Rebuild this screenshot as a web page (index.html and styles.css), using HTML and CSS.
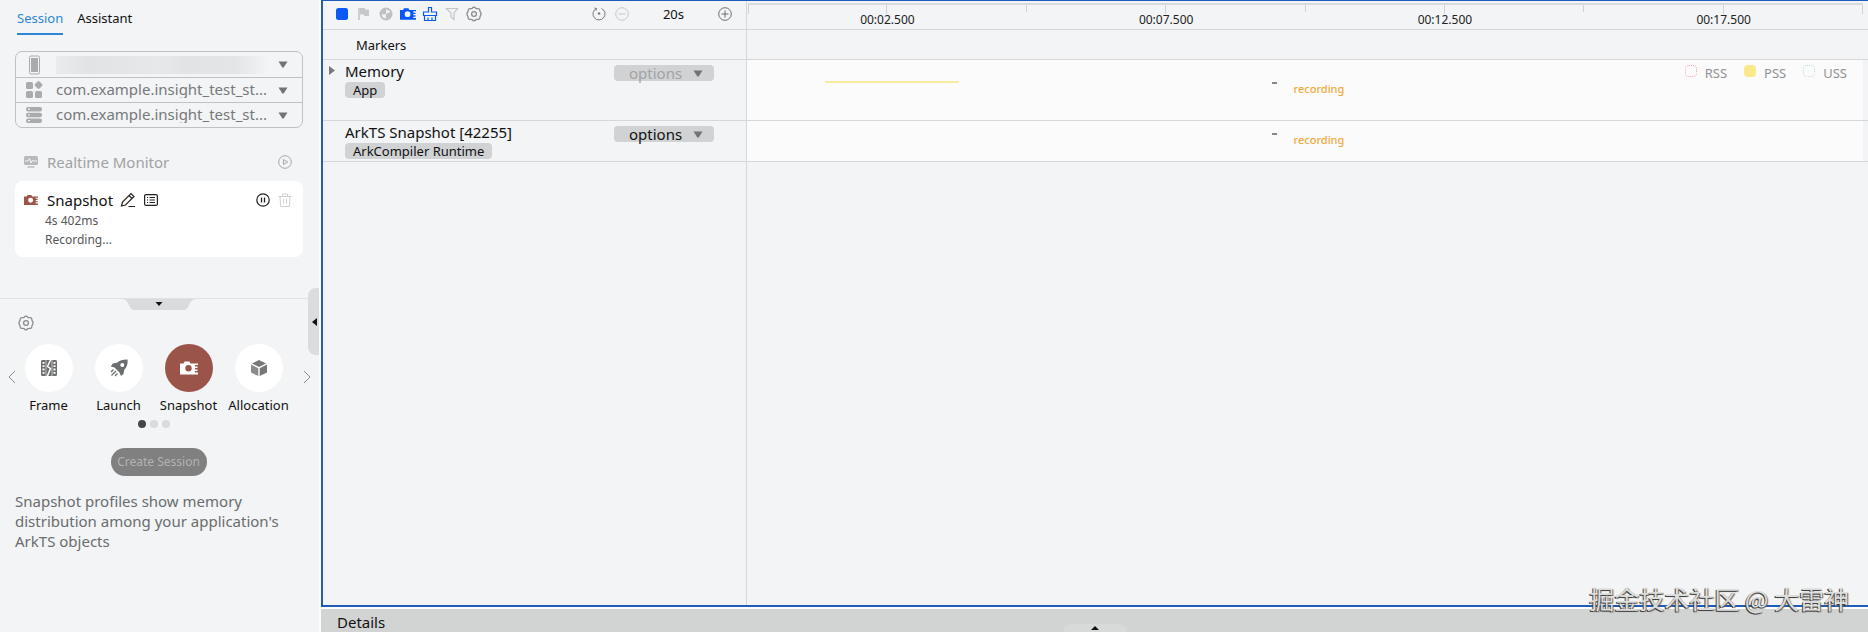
FILE: index.html
```html
<!DOCTYPE html>
<html lang="en">
<head>
<meta charset="utf-8">
<title>Profiler</title>
<link rel="stylesheet" href="styles.css">
</head>
<body>
<svg class="defs" aria-hidden="true">
  <defs>
    <symbol id="gear" viewBox="0 0 16 16"><path d="M6.200 2.200Q8 .2 9.800 2.200q.6.500 1.500.4 2.600-.3 2.600 2.100 0 .8.500 1.500 1.300 1.800 0 3.600-.5.700-.5 1.500 0 2.400-2.600 2.100-.9-.1-1.500.4-1.800 2-3.600 0-.6-.5-1.500-.4-2.600.3-2.600-2.100 0-.8-.5-1.500-1.300-1.800 0-3.600.5-.7.500-1.500 0-2.400 2.600-2.100.9.100 1.500-.4z" fill="none" stroke="currentColor" stroke-width="1.300" stroke-linejoin="round"/><circle cx="8" cy="8" r="2.400" fill="none" stroke="currentColor" stroke-width="1.300"/></symbol>
    <symbol id="camera" viewBox="0 0 18 15"><path fill-rule="evenodd" d="M0 3h3.500l1-2h5l1 2H18v1.500h-3V6h2.500v1.500H15V9h2.500v1.500H15V12h3v2H0zM8.500 4.500a3.200 3.200 0 1 0 0 6.400 3.200 3.200 0 0 0 0-6.400z" fill="currentColor"/></symbol>
    <symbol id="down" viewBox="0 0 10 7"><path d="M.5.500h9L5.800 6.200q-.8.900-1.600 0z" fill="currentColor"/></symbol>
  </defs>
</svg>
<div class="app">
  <aside class="sidebar">
    <section class="sessions">
      <nav class="tabs">
        <button class="tab tab-active">Session</button>
        <button class="tab">Assistant</button>
      </nav>
      <div class="targets">
        <div class="target">
          <svg class="target-icon" viewBox="0 0 18 20"><rect x="4.500" y="1" width="10" height="18" rx="1.500" fill="none" stroke="#a9abad"/><rect x="6" y="3" width="7" height="14" fill="#a9abad"/></svg>
          <span class="redacted"></span>
          <select class="target-select" aria-label="Device"><option></option></select>
          <svg class="caret"><use href="#down"/></svg>
        </div>
        <div class="target">
          <svg class="target-icon" viewBox="0 0 18 20" fill="#a9abad"><rect x="1" y="2" width="7" height="7" rx="1.500"/><rect x="1" y="11" width="7" height="7" rx="1.500"/><rect x="10" y="11" width="7" height="7" rx="1.500"/><path d="M13.500 1q.6 0 1 .4l2.600 2.700q.7.900 0 1.800l-2.600 2.700q-.9.800-1.900 0L10 5.900q-.8-.9 0-1.800l2.600-2.700q.4-.4.900-.4z"/></svg>
          <select class="target-select" aria-label="Application"><option>com.example.insight_test_st...</option></select>
          <svg class="caret"><use href="#down"/></svg>
        </div>
        <div class="target">
          <svg class="target-icon" viewBox="0 0 18 20"><g fill="#a9abad"><rect x="1" y="2" width="16" height="4.500" rx="2"/><rect x="1" y="7.700" width="16" height="4.500" rx="2"/><rect x="1" y="13.400" width="16" height="4.500" rx="2"/></g><path d="M3 4.200h2M3 10h2M3 15.700h2" stroke="#f2f4f5" stroke-width="1.200"/></svg>
          <select class="target-select" aria-label="Process"><option>com.example.insight_test_st...</option></select>
          <svg class="caret"><use href="#down"/></svg>
        </div>
      </div>
      <div class="monitor">
        <svg class="i14" viewBox="0 0 14 12"><rect width="14" height="9" rx="1.500" fill="#b7b9bb"/><path d="M3.500 10.300h7v1.400h-7z" fill="#b7b9bb"/><path d="M1 5h3l1.500-2.500L7 7l1.500-3 1 1H13" fill="none" stroke="#f2f4f5"/></svg>
        <span class="item-name">Realtime Monitor</span>
        <button class="icon-btn push" aria-label="Start monitor"><svg class="i14" viewBox="0 0 14 14" fill="none" stroke="#a5a7a9"><circle cx="7" cy="7" r="6.300"/><path d="M5.500 4.500v5L9.700 7z"/></svg></button>
      </div>
      <article class="card">
        <div class="card-head">
          <svg class="i14 brick"><use href="#camera"/></svg>
          <span class="item-name">Snapshot</span>
          <button class="icon-btn edit" aria-label="Rename"><svg class="i16" viewBox="0 0 16 16" fill="none" stroke="#222"><path d="M1.500 14l1-4L11 1.500l3 3L5.500 13zM9 3.500l3 3M8.500 14.500H15" stroke-width="1.200"/></svg></button>
          <button class="icon-btn" aria-label="Log"><svg class="i14" viewBox="0 0 14 14" fill="none" stroke="#222"><rect x=".6" y="1.600" width="12.800" height="10.800" rx="1.500" stroke-width="1.200"/><path d="M3 4.500h1M5.500 4.500H11M3 7h1M5.500 7H11M3 9.500h1M5.500 9.500H11"/></svg></button>
          <button class="icon-btn push" aria-label="Pause"><svg class="i14" viewBox="0 0 14 14" fill="none" stroke="#222"><circle cx="7" cy="7" r="6.200" stroke-width="1.200"/><path d="M5.500 4.500v5M8.500 4.500v5" stroke-width="1.300"/></svg></button>
          <button class="icon-btn" aria-label="Delete" disabled><svg class="i14" viewBox="0 0 14 14" fill="none" stroke="#cfcfcf"><path d="M.5 3.500h13M4.500 3.500V1h5v2.500M2 3.500l.7 10h8.600l.7-10M5.500 6v4.500M8.500 6v4.500"/></svg></button>
        </div>
        <p class="card-line">4s 402ms</p>
        <p class="card-line">Recording...</p>
      </article>
    </section>
    <section class="create">
      <button class="fold" aria-label="Collapse templates"><svg class="fold-shape" viewBox="0 0 72 11"><path d="M0 0h72q-4 1-6 6-2 5-5 5H11q-3 0-5-5-2-5-6-6z" fill="#dadbdc"/><path d="M32.500 3h7L36 7z" fill="#111"/></svg></button>
      <button class="icon-btn settings" aria-label="Template settings"><svg class="i16"><use href="#gear"/></svg></button>
      <div class="carousel">
        <button class="icon-btn arrow" aria-label="Previous"><svg class="chev" viewBox="0 0 8 14"><path d="M7 1L1 7l6 6" fill="none" stroke="#8a8c8e"/></svg></button>
        <div class="templates">
          <button class="template"><span class="disc"><svg class="i18" viewBox="0 0 18 18"><rect x="1" y="1" width="16" height="16" rx="1.500" fill="#6b6d6f"/><path d="M3.500 3v13M14.500 3v13" stroke="#fff" stroke-width="2" stroke-dasharray="1.800 1.500"/><path d="M6 1v16M12 1v16" stroke="#fff" stroke-width=".6"/><path d="M11 0L7.500 7.500l3 2L7 18" fill="none" stroke="#fff" stroke-width="1.500"/></svg></span>Frame</button>
          <button class="template"><span class="disc"><svg class="i18" viewBox="0 0 18 18"><path fill-rule="evenodd" d="M17.500.500q.8 6-3.300 10.500L13.500 15l-2.500 2-1.500-3.500L4.500 8.500.8 7.500l2-3L7 3.800Q11 .3 17.500.500zM12.300 4a2 2 0 1 0 0 4 2 2 0 0 0 0-4z" fill="#6b6d6f"/><path d="M1 13l2.500-2.500M1.500 16.500L6 12M5 17l2.500-2.500" stroke="#6b6d6f" stroke-width="1.200"/></svg></span>Launch</button>
          <button class="template"><span class="disc disc-on"><svg class="i18"><use href="#camera"/></svg></span>Snapshot</button>
          <button class="template"><span class="disc"><svg class="i18" viewBox="0 0 18 18"><path d="M9 1l7 3.500L9 8 2 4.500z" fill="#777"/><path d="M1 5.500l7.300 3.700V17L1 13.500z" fill="#8b8b8b"/><path d="M17 5.500L9.700 9.200V17l7.300-3.500z" fill="#777"/></svg></span>Allocation</button>
        </div>
        <button class="icon-btn arrow" aria-label="Next"><svg class="chev" viewBox="0 0 8 14"><path d="M1 1l6 6-6 6" fill="none" stroke="#8a8c8e"/></svg></button>
      </div>
      <div class="dots"><i class="dot dot-on"></i><i class="dot"></i><i class="dot"></i></div>
      <button class="create-btn" disabled>Create Session</button>
      <p class="about">Snapshot profiles show memory distribution among your application's ArkTS objects</p>
    </section>
    <button class="handle" aria-label="Hide sidebar"><svg class="handle-arrow" viewBox="0 0 5 8"><path d="M5 0v8L0 4z" fill="#111"/></svg></button>
  </aside>

  <div class="workspace">
    <main class="recorder">
      <div class="row row-tools">
        <div class="left tools">
          <button class="icon-btn" aria-label="Stop"><svg class="i16" viewBox="0 0 16 16"><rect x="2" y="2" width="12" height="12" rx="2.500" fill="#0a59f7"/></svg></button>
          <button class="icon-btn" aria-label="Flag"><svg class="i16" viewBox="0 0 16 16"><path d="M3 2v12" stroke="#b9bbbd" stroke-width="1.300"/><path d="M4 2h5v1.500h4V10H8V8.500H4z" fill="#c6c8ca"/></svg></button>
          <button class="icon-btn" aria-label="Collect garbage"><svg class="i16" viewBox="0 0 16 16"><circle cx="8" cy="8" r="6.500" fill="#bfc1c3"/><path d="M8 3.500q3 0 4.500 2.500L8 8zM3.500 8.500L8 8v4.500q-3.500 0-4.500-4z" fill="#eef0f1"/></svg></button>
          <button class="icon-btn blue" aria-label="Take snapshot"><svg class="i16"><use href="#camera"/></svg></button>
          <button class="icon-btn" aria-label="Clear"><svg class="i16" viewBox="0 0 16 16" fill="none" stroke="#0a59f7" stroke-width="1.200"><path d="M6.500 6V1.500h3V6h5v3.500h-13V6zM2.500 9.500v5h11v-5M6 14.500v-3M10 14.500v-3"/></svg></button>
          <button class="icon-btn" aria-label="Filter"><svg class="i16" viewBox="0 0 16 16" fill="none" stroke="#c3c5c7" stroke-width="1.200"><path d="M2.500 2.500h11L10 7v6.500L7 11V7z"/></svg></button>
          <button class="icon-btn gray" aria-label="Options"><svg class="i16"><use href="#gear"/></svg></button>
          <button class="icon-btn push" aria-label="Reset zoom"><svg class="i14" viewBox="0 0 14 14" fill="none" stroke="#77797b"><path d="M4.500 1.500a6 6 0 1 0 5 0"/><path d="M4.500 1.500L2.500 1M4.500 1.500L4 3.500"/><circle cx="7" cy="6.500" r=".8" fill="#333"/></svg></button>
          <button class="icon-btn" aria-label="Zoom out"><svg class="i14" viewBox="0 0 14 14" fill="none" stroke="#c6c8ca"><circle cx="7" cy="7" r="6.300"/><path d="M3.500 7h7"/></svg></button>
          <span class="span-value">20s</span>
          <button class="icon-btn" aria-label="Zoom in"><svg class="i14" viewBox="0 0 14 14" fill="none" stroke="#6b6d6f"><circle cx="7" cy="7" r="6.300"/><path d="M3.500 7h7M7 3.500v7"/></svg></button>
        </div>
        <div class="ruler">
          <i class="tick tall first"></i>
          <div class="seg"><i class="tick tall"></i><span class="time">00:02.500</span></div>
          <div class="seg"><i class="tick"></i></div>
          <div class="seg"><i class="tick tall"></i><span class="time">00:07.500</span></div>
          <div class="seg"><i class="tick"></i></div>
          <div class="seg"><i class="tick tall"></i><span class="time">00:12.500</span></div>
          <div class="seg"><i class="tick"></i></div>
          <div class="seg"><i class="tick tall"></i><span class="time">00:17.500</span></div>
          <div class="seg"><i class="tick tall"></i></div>
        </div>
      </div>
      <div class="row row-markers"><div class="left markers">Markers</div></div>
      <div class="row row-memory">
        <div class="left lane-head">
          <button class="icon-btn expand" aria-label="Expand"><svg class="expander" viewBox="0 0 6 9"><path d="M0 0v9l6-4.500z" fill="#77797b"/></svg></button>
          <div class="lane-title"><h2 class="lane-name">Memory</h2><span class="tag">App</span></div>
          <div class="options off"><select class="options-select" aria-label="Memory options" disabled><option>options</option></select><svg class="caret"><use href="#down"/></svg></div>
        </div>
        <div class="track">
          <i class="usage"></i>
          <div class="state"><i class="dash"></i><span class="rec">recording</span></div>
          <div class="legend">
            <span class="key"><i class="sw sw-rss"></i>RSS</span>
            <span class="key"><i class="sw sw-pss"></i>PSS</span>
            <span class="key"><i class="sw sw-uss"></i>USS</span>
          </div>
        </div>
      </div>
      <div class="row row-ark">
        <div class="left lane-head">
          <span class="expand"></span>
          <div class="lane-title"><h2 class="lane-name">ArkTS Snapshot [42255]</h2><span class="tag">ArkCompiler Runtime</span></div>
          <div class="options"><select class="options-select" aria-label="ArkTS Snapshot options"><option>options</option></select><svg class="caret"><use href="#down"/></svg></div>
        </div>
        <div class="track"><div class="state"><i class="dash"></i><span class="rec">recording</span></div></div>
      </div>
      <div class="rest"><div class="left"></div></div>
    </main>
    <footer class="details">
      <span>Details</span>
      <button class="icon-btn raise" aria-label="Expand details"><svg class="raise-arrow" viewBox="0 0 8 4"><path d="M0 4h8L4 0z" fill="#111"/></svg></button>
    </footer>
  </div>
  <div class="watermark">掘金技术社区 @ 大雷神</div>
</div>
</body>
</html>
```

FILE: styles.css
```css
* { box-sizing: border-box; }
body { margin: 0; background: #f2f4f5; color: #111; font: 13px/18px "Noto Sans", "Noto Sans CJK SC", sans-serif; }
button, select { font: inherit; color: inherit; background: none; border: 0; padding: 0; margin: 0; }
svg { display: block; flex: none; }
p, h2 { margin: 0; font-weight: 400; }
i { display: block; }
.defs { position: absolute; width: 0; height: 0; }
.app { position: relative; display: grid; grid-template-columns: 321px minmax(0, 1fr); height: 100vh; overflow: hidden; }
.icon-btn { display: flex; flex: none; }
.push { margin-left: auto; }
.i14 { width: 14px; height: 14px; }
.i16 { width: 16px; height: 16px; }
.i18 { width: 18px; height: 18px; }
.caret { width: 10px; height: 7px; color: #717375; pointer-events: none; }

.sidebar { position: relative; border-right: 2px solid #fbfcfc; display: flex; flex-direction: column; }
.sessions { height: 299px; padding: 9px 16px 0 15px; border-bottom: 1px solid #dfe1e2; }
.tabs { display: flex; gap: 14px; padding-left: 2px; }
.tab { height: 26px; padding-bottom: 6px; border-bottom: 2px solid transparent; }
.tab-active { color: #2d86d4; border-color: #2d86d4; }
.targets { margin-top: 16px; border: 1px solid #bfc1c3; border-radius: 7px; }
.target { display: flex; align-items: center; height: 25px; padding: 0 14px 0 9px; }
.target + .target { border-top: 1px solid #bfc1c3; }
.target-icon { width: 18px; height: 20px; margin-right: 13px; }
.target-select { appearance: none; flex: 1; min-width: 0; height: 24px; padding-bottom: 2px; font-size: 15px; color: #77797b; }
.redacted { width: 212px; height: 18px; background: linear-gradient(90deg, #e9ebec, #e1e3e4 15%, #e6e8e9 50%, #e1e3e4 60%, #e3e5e6 85%, #f2f4f5); }
.monitor { display: flex; align-items: center; height: 24px; margin-top: 22px; padding: 0 11px 0 9px; color: #a0a2a4; }
.item-name { margin-left: 9px; font-size: 15px; }
.card { height: 76px; margin-top: 7px; padding: 8px 11px 0 9px; border-radius: 8px; background: #fff; }
.card-head { display: flex; align-items: center; height: 22px; }
.card-head .icon-btn + .icon-btn { margin-left: 8px; }
.card-head .edit { margin-left: 7px; }
.card-head .icon-btn.push { margin-left: auto; }
.brick { color: #9a544a; }
.card-line { padding-left: 21px; margin-top: 1px; color: #55575a; font-size: 12px; }

.create { display: flex; flex-direction: column; }
.fold { align-self: center; margin-right: 2px; }
.fold-shape { width: 72px; height: 11px; }
.settings { margin: 5px 0 0 18px; color: #8a8c8e; }
.carousel { display: flex; align-items: center; margin-top: 13px; padding: 0 8px; }
.arrow { margin-bottom: 4px; }
.chev { width: 8px; height: 14px; }
.templates { flex: 1; display: grid; grid-template-columns: repeat(4, 70px); justify-content: center; margin: 0 6px 0 -6px; }
.template { display: flex; flex-direction: column; align-items: center; gap: 4px; }
.disc { display: grid; place-items: center; width: 48px; height: 48px; border-radius: 50%; background: #fff; }
.disc-on { background: #9a544a; color: #fff; }
.dots { display: flex; justify-content: center; gap: 4px; margin: 6px 11px 0 0; }
.dot { width: 8px; height: 8px; border-radius: 50%; background: #d8dadb; }
.dot-on { background: #444648; }
.create-btn { align-self: center; width: 96px; height: 28px; margin: 20px 2px 0 0; border-radius: 14px; background: #808080; color: #b2b2b2; font-size: 12px; }
.about { padding: 15px 28px 0 15px; color: #6a6c6e; font-size: 15px; line-height: 20px; }
.handle { position: absolute; top: 288px; right: 0; width: 11px; height: 67px; display: grid; place-items: center end; padding-right: 2px; background: #dadcdd; border-radius: 8px 0 0 8px; }
.handle-arrow { width: 5px; height: 8px; }

.workspace { display: flex; flex-direction: column; min-width: 0; }
.recorder { flex: 1; display: flex; flex-direction: column; border: solid #1f5bb8; border-width: 1px 0 2px 2px; }
.row { display: flex; border-bottom: 1px solid #d5d7d9; }
.left { flex: none; width: 424px; border-right: 1px solid #d5d7d9; }
.row-tools { height: 29px; }
.tools { display: flex; align-items: center; gap: 6px; padding: 0 14px 2px 11px; }
.blue { color: #0a59f7; }
.gray { color: #8a8c8e; }
.tools .push + .icon-btn { margin-left: 3px; }
.span-value { width: 77px; text-align: center; }
.ruler { position: relative; flex: 1; display: grid; grid-template-columns: repeat(8, 1fr); margin: 2px 5px 0 1px; border-top: 2px solid #dcd9e0; }
.seg { position: relative; display: flex; justify-content: flex-end; }
.tick { width: 1px; height: 7px; background: #d0d2d4; }
.tall { height: 9px; }
.first { position: absolute; left: 0; top: 0; }
.time { position: absolute; right: 0; top: 7px; transform: translateX(50%); font-size: 12px; line-height: 16px; color: #222; }
.row-markers { height: 30px; }
.markers { padding: 6px 0 0 33px; }
.row-memory { height: 61px; }
.row-ark { height: 41px; }
.lane-head { display: flex; align-items: flex-start; padding-right: 32px; }
.expand { width: 16px; margin: 6px 0 0 6px; }
.expander { width: 6px; height: 9px; }
.lane-title { flex: 1; }
.lane-name { font-size: 15px; line-height: 22px; }
.tag { display: block; width: fit-content; padding: 0 8px; border-radius: 4px; background: #d0d2d3; line-height: 16px; }
.options { display: flex; align-items: center; width: 100px; height: 16px; margin-top: 5px; padding-right: 11px; border-radius: 4px; background: #d0d2d3; }
.options-select { appearance: none; flex: 1; height: 22px; padding-left: 15px; font-size: 15px; line-height: 22px; opacity: 1; }
.off .options-select { color: #a2a4a6; }
.track { position: relative; flex: 1; margin-right: 5px; background: #fbfbfb; }
.usage { position: absolute; left: 7%; top: 21px; width: 12%; height: 2px; background: #f8ec9e; }
.state { position: absolute; left: 47%; top: 21px; display: flex; gap: 17px; }
.dash { width: 5px; height: 2px; margin-top: 1px; background: #87898b; }
.row-ark .state { top: 11px; }
.rec { font-size: 11px; line-height: 16px; color: #f2a93b; font-weight: 500; }
.legend { position: absolute; top: 3px; right: 16px; display: flex; gap: 17px; color: #909294; }
.key { display: flex; gap: 8px; line-height: 20px; }
.sw { width: 12px; height: 12px; margin-top: 2px; border-radius: 4px; border: 1px dotted #eba9ad; }
.sw-pss { border-color: #fae88c; background: #fae88c; }
.sw-uss { border-color: #bfe0db; }
.rest { flex: 1; display: flex; }
.details { position: relative; height: 25px; border-top: 2px solid #fbfcfc; background: #d2d3d3; padding: 3px 0 0 16px; font-size: 15px; line-height: 20px; }
.raise { position: absolute; left: 50%; bottom: 0; width: 64px; height: 8px; justify-content: center; padding-top: 2px; margin-left: -32px; border-radius: 8px 8px 0 0; background: #d8d9d9; }
.raise-arrow { width: 8px; height: 4px; }
.watermark { position: absolute; right: 19px; bottom: 16px; font: 25px/36px "Noto Sans CJK SC", sans-serif; color: #dcdddd; text-shadow: -1px 1px 0 #444, 1px 1px 1px #666; }
```
